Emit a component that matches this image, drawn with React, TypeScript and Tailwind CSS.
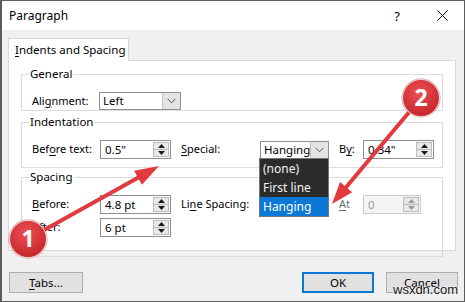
import React from "react";

function Spinner({ disabled }: { disabled?: boolean }) {
  const c = disabled ? "#9a9a9a" : "#1a1a1a";
  return (
    <div className="my-[1px] mr-[1px] flex w-[16px] flex-col border border-[#bdbdbd] bg-[#e8e8e8]">
      <div className="flex flex-1 items-center justify-center border-b border-[#bdbdbd]">
        <svg width="7" height="4" viewBox="0 0 7 4">
          <polygon points="0,4 7,4 3.5,0" fill={c} />
        </svg>
      </div>
      <div className="flex flex-1 items-center justify-center">
        <svg width="7" height="4" viewBox="0 0 7 4">
          <polygon points="0,0 7,0 3.5,4" fill={c} />
        </svg>
      </div>
    </div>
  );
}

function NumInput({ value, w, disabled }: { value: string; w: string; disabled?: boolean }) {
  return (
    <div
      className={
        "flex h-[19px] " +
        w +
        (disabled ? " border border-[#cccccc] bg-[#f4f4f4]" : " border border-[#8f8f8f] bg-white")
      }
    >
      <div
        className={
          "flex-1 whitespace-nowrap pl-[4px] text-[11.5px] leading-[17px] " +
          (disabled ? "text-[#9a9a9a]" : "text-black")
        }
      >
        {value}
      </div>
      <Spinner disabled={disabled} />
    </div>
  );
}

function Chevron() {
  return (
    <svg width="9" height="6" viewBox="0 0 9 6">
      <polyline points="0.5,0.8 4.5,4.8 8.5,0.8" fill="none" stroke="#555" strokeWidth="1" />
    </svg>
  );
}

function Select({ value, w, children }: { value: string; w: string; children?: React.ReactNode }) {
  return (
    <div className={"relative flex h-[18px] border border-[#8f8f8f] bg-white " + w}>
      <div className="flex-1 whitespace-nowrap pl-[3px] text-[11.5px] leading-[16px] text-black">{value}</div>
      <div className="flex w-[18px] items-center justify-center border-l border-[#c5c5c5] bg-[#e3e3e3]">
        <Chevron />
      </div>
      {children}
    </div>
  );
}

function U({ children }: { children: React.ReactNode }) {
  return <span className="underline decoration-1 underline-offset-[2px]">{children}</span>;
}

function Group({ label, h, children }: { label: string; h: string; children: React.ReactNode }) {
  return (
    <div className={"relative w-[422px] border border-[#dcdcdc] pl-[10px] pt-[17px] " + h}>
      <span className="absolute left-[7px] top-[-8px] whitespace-nowrap bg-white px-[1px] text-[11.5px] leading-[14px] text-black">
        {label}
      </span>
      {children}
    </div>
  );
}

function Badge({ n }: { n: string }) {
  return (
    <svg width="42" height="42" viewBox="0 0 42 42">
      <defs>
        <radialGradient id={"g" + n} cx="45%" cy="35%" r="65%">
          <stop offset="0%" stopColor="#ee5055" />
          <stop offset="100%" stopColor="#c4262c" />
        </radialGradient>
      </defs>
      <circle cx="21" cy="21" r="19.5" fill="#9e1d22" opacity="0.5" />
      <circle cx="21" cy="21" r="18.5" fill={"url(#g" + n + ")"} stroke="#ffffff" strokeOpacity="0.7" strokeWidth="1.2" />
      <text
        x="21"
        y="29"
        textAnchor="middle"
        fontFamily="'Open Sans', 'Liberation Sans', sans-serif"
        fontWeight="700"
        fontSize="23"
        fill="#ffffff"
      >
        {n}
      </text>
    </svg>
  );
}

export default function App() {
  return (
    <div className="relative flex h-[302px] w-[465px] flex-col overflow-hidden border border-l-2 border-[#5c5c5c] bg-[#f0f0f0] font-['Noto_Sans',sans-serif] text-black">
      {/* Title bar */}
      <div className="flex h-[29px] items-center bg-white pl-[7px] pr-[16px]">
        <span className="text-[12px] leading-[16px]">Paragraph</span>
        <span className="ml-auto mr-[37px] text-[13px] leading-[16px]">?</span>
        <svg width="11" height="11" viewBox="0 0 11 11">
          <line x1="0.5" y1="0.5" x2="10.5" y2="10.5" stroke="#111" strokeWidth="1" />
          <line x1="10.5" y1="0.5" x2="0.5" y2="10.5" stroke="#111" strokeWidth="1" />
        </svg>
      </div>

      {/* Body */}
      <div className="flex flex-1 flex-col px-[6px] pt-[8px]">
        {/* Tabs */}
        <div className="flex">
          <div className="relative z-10 -mb-px flex h-[23px] w-[121px] items-center whitespace-nowrap border border-b-0 border-[#d9d9d9] bg-white pl-[6px] text-[11.5px]">
            <span>
              <U>I</U>ndents and Spacing
            </span>
          </div>
        </div>

        {/* Panel */}
        <div className="flex h-[191px] w-[448px] flex-col border border-[#d9d9d9] bg-white pl-[12px] pt-[13px] text-[11px]">
          <Group label="General" h="h-[42px]">
            <div className="flex items-center">
              <span className="w-[67px] whitespace-nowrap">
                Ali<U>g</U>nment:
              </span>
              <Select value="Left" w="w-[82px]" />
            </div>
          </Group>

          <div className="mt-[11px]">
            <Group label="Indentation" h="h-[46px]">
              <div className="flex items-center">
                <span className="w-[68px] whitespace-nowrap">
                  Bef<U>o</U>re text:
                </span>
                <NumInput value={'0.5"'} w="w-[71px]" />
                <span className="ml-[10px] w-[79px] whitespace-nowrap">
                  <U>S</U>pecial:
                </span>
                <Select value="Hanging" w="w-[69px]">
                  <div className="absolute left-[-2px] top-[16px] z-20 flex w-[70px] flex-col border border-[#767676] bg-[#2b2b2b] text-[12px] text-[#f2f2f2]">
                    <div className="h-[19px] whitespace-nowrap pl-[3px] leading-[19px]">(none)</div>
                    <div className="h-[19px] whitespace-nowrap pl-[3px] leading-[19px]">First line</div>
                    <div className="h-[19px] whitespace-nowrap bg-[#0a78d6] pl-[3px] leading-[19px] text-white">
                      Hanging
                    </div>
                  </div>
                </Select>
                <span className="ml-[10px] w-[24px] whitespace-nowrap">
                  B<U>y</U>:
                </span>
                <NumInput value={'0.34"'} w="w-[71px]" />
              </div>
            </Group>
          </div>

          <div className="mt-[9px]">
            <div className="relative h-[80px] w-[422px] border border-[#dcdcdc] pl-[10px] pt-[17px]">
              <span className="absolute left-[7px] top-[-8px] whitespace-nowrap bg-white px-[1px] text-[11.5px] leading-[14px]">
                Spacing
              </span>
              <div className="flex items-center">
                <span className="w-[68px] whitespace-nowrap">
                  <U>B</U>efore:
                </span>
                <NumInput value="4.8 pt" w="w-[71px]" />
                <span className="ml-[10px] w-[79px] whitespace-nowrap">
                  Li<U>n</U>e Spacing:
                </span>
                <Select value="Single" w="w-[69px]" />
                <span className="ml-[10px] w-[24px] whitespace-nowrap text-[#6d6d6d]">
                  <U>A</U>t
                </span>
                <NumInput value="0" w="w-[58px]" disabled />
              </div>
              <div className="mt-[4px] flex items-center">
                <span className="w-[68px] whitespace-nowrap">
                  A<U>f</U>ter:
                </span>
                <NumInput value="6 pt" w="w-[71px]" />
              </div>
            </div>
          </div>
        </div>

        {/* Buttons */}
        <div className="mt-[21px] flex items-center pl-px text-[11.5px]">
          <div className="flex h-[21px] w-[74px] items-center justify-center border border-[#adadad] bg-[#e1e1e1]">
            <span>
              <U>T</U>abs...
            </span>
          </div>
          <div className="ml-auto flex h-[21px] w-[72px] items-center justify-center border-2 border-[#0a78d6] bg-[#e1e1e1]">
            OK
          </div>
          <div className="ml-[12px] flex h-[21px] w-[72px] items-center justify-center border border-[#adadad] bg-[#e1e1e1]">
            Cancel
          </div>
        </div>
      </div>

      {/* Annotation arrows */}
      <svg className="pointer-events-none absolute left-0 top-0 z-30" width="465" height="302" viewBox="0 0 465 302">
        <line x1="26" y1="238" x2="140" y2="174.5" stroke="#e23a3f" strokeWidth="4" strokeLinecap="round" />
        <polygon points="157,165 139.9,183.7 132.1,169.7" fill="#e23a3f" />
        <line x1="419" y1="97" x2="343" y2="187.5" stroke="#e23a3f" strokeWidth="4" strokeLinecap="round" />
        <polygon points="330,203 350.2,191.2 338,181" fill="#e23a3f" />
      </svg>

      <div className="pointer-events-none absolute left-[5px] top-[217px] z-40">
        <Badge n="1" />
      </div>
      <div className="pointer-events-none absolute left-[398px] top-[76px] z-40">
        <Badge n="2" />
      </div>

      {/* Watermark */}
      <div className="pointer-events-none absolute left-[391px] top-[281px] z-50 font-['Liberation_Sans',sans-serif] text-[13px] leading-[16px] text-[#111] [text-shadow:0_0_2px_#fff,0_0_2px_#fff,0_0_1px_#fff]">
        wsxdn.com
      </div>
    </div>
  );
}
